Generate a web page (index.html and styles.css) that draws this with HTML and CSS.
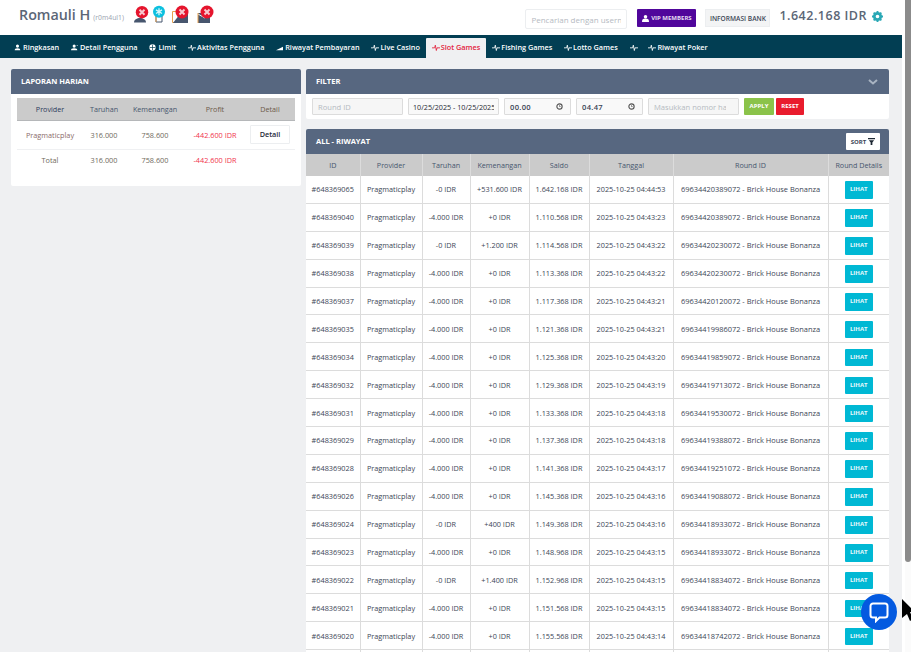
FILE: index.html
```html
<!DOCTYPE html>
<html lang="id">
<head>
    <meta charset="UTF-8">
    <meta name="viewport" content="width=device-width, initial-scale=1.0">
    <title>Romauli H - Slot Games</title>
    <link rel="stylesheet" href="styles.css">
</head>
<body>
    <div class="page">
        <header class="topbar">
            <div class="user">
                <span class="user-name">Romauli H</span>
                <span class="user-code">(r0m4ul1)</span>
                <div class="status-icons">
                    <svg class="status" width="15" height="18" viewBox="0 0 15 18"><path d="M0 17.500c0-3 3-4.500 6-4.500s6 1.500 6 4.500z" fill="#47566e"/><circle cx="8" cy="7.200" r="6.200" fill="#e5152d"/><path d="M5.500 4.700l5 5M10.500 4.700l-5 5" stroke="#f7c9cf" stroke-width="2"/></svg>
                    <svg class="status" width="14" height="18" viewBox="0 0 14 18"><path d="M4 11h6v6H4z" fill="#fff" stroke="#47566e"/><path d="M4 11v6" stroke="#e8a14f"/><circle cx="7" cy="6.700" r="6" fill="#0cc0df"/><path d="M7 3.200v7M4 4.900l6 3.600M10 4.900l-6 3.600" stroke="#d8f6fb" stroke-width="1.300"/></svg>
                    <svg class="status wide" width="20" height="18" viewBox="0 0 20 18"><path d="M2.500 6.500h6v11h-6z" fill="#fff" stroke="#e8a14f"/><path d="M3 18l7-9h8v9z" fill="#47566e"/><circle cx="12" cy="7" r="6.500" fill="#e5152d"/><path d="M9.500 4.500l5 5M14.500 4.500l-5 5" stroke="#f7c9cf" stroke-width="2"/></svg>
                    <svg class="status wide" width="20" height="18" viewBox="0 0 20 18"><path d="M3 8h12v10H3z" fill="#47566e"/><path d="M3 9l7 4" stroke="#fff"/><path d="M3 8v10" stroke="#e8a14f"/><circle cx="12" cy="7" r="6.500" fill="#e5152d"/><path d="M9.500 4.500l5 5M14.500 4.500l-5 5" stroke="#f7c9cf" stroke-width="2"/></svg>
                </div>
            </div>
            <div class="top-actions">
                <input class="search" type="text" placeholder="Pencarian dengan username">
                <a class="btn-vip" href="#">
                    <svg width="7" height="7" viewBox="0 0 8 8"><circle cx="4" cy="2" r="2" fill="#fff"/><path d="M0 8c0-3 1-4 4-4s4 1 4 4z" fill="#fff"/></svg>
                    VIP MEMBERS
                </a>
                <a class="btn-bank" href="#">INFORMASI BANK</a>
                <span class="balance">1.642.168 IDR</span>
                <svg class="gear" width="11" height="11" viewBox="0 0 12 12"><circle cx="6" cy="6" r="3.500" fill="none" stroke="#2aa8b5" stroke-width="3"/><path d="M6 0v2M6 10v2M0 6h2M10 6h2M1.800 1.800l1.400 1.400M8.800 8.800l1.400 1.400M1.800 10.200l1.400-1.400M8.800 3.200l1.400-1.400" stroke="#2aa8b5" stroke-width="2"/></svg>
            </div>
        </header>

        <nav class="tabs">
            <a class="tab" href="#"><svg class="ico" viewBox="0 0 10 10"><circle cx="5" cy="3" r="2.200"/><path d="M1 9c0-2 1-3 4-3s4 1 4 3z"/></svg>Ringkasan</a>
            <a class="tab" href="#"><svg class="ico" viewBox="0 0 10 10"><circle cx="4.500" cy="3" r="2.200"/><path d="M0 9c0-2 1-3 4.500-3S9 7 9 9z"/><path d="M8 2h2v1H8z"/></svg>Detail Pengguna</a>
            <a class="tab" href="#"><svg class="ico" viewBox="0 0 10 10"><circle cx="5" cy="5" r="4.500"/><path d="M1 5h8M5 1v8" stroke="#023e53" stroke-width="1"/></svg>Limit</a>
            <a class="tab" href="#"><svg class="ico pulse" viewBox="0 0 12 10"><path d="M0 5.500h4L5 1.500l1.500 8 1-4h4.500"/></svg>Aktivitas Pengguna</a>
            <a class="tab" href="#"><svg class="ico" viewBox="0 0 10 10"><path d="M0 9l10-5v5z"/></svg>Riwayat Pembayaran</a>
            <a class="tab" href="#"><svg class="ico pulse" viewBox="0 0 12 10"><path d="M0 5.500h4L5 1.500l1.500 8 1-4h4.500"/></svg>Live Casino</a>
            <a class="tab active" href="#"><svg class="ico pulse" viewBox="0 0 12 10"><path d="M0 5.500h4L5 1.500l1.500 8 1-4h4.500"/></svg>Slot Games</a>
            <a class="tab" href="#"><svg class="ico pulse" viewBox="0 0 12 10"><path d="M0 5.500h4L5 1.500l1.500 8 1-4h4.500"/></svg>Fishing Games</a>
            <a class="tab" href="#"><svg class="ico pulse" viewBox="0 0 12 10"><path d="M0 5.500h4L5 1.500l1.500 8 1-4h4.500"/></svg>Lotto Games</a>
            <a class="tab tab-blank" href="#"><svg class="ico pulse" viewBox="0 0 12 10"><path d="M0 5.500h4L5 1.500l1.500 8 1-4h4.500"/></svg></a>
            <a class="tab" href="#"><svg class="ico pulse" viewBox="0 0 12 10"><path d="M0 5.500h4L5 1.500l1.500 8 1-4h4.500"/></svg>Riwayat Poker</a>
        </nav>

        <main class="content">
            <section class="side">
                <div class="card">
                    <div class="card-head">LAPORAN HARIAN</div>
                    <div class="report-body">
                        <table class="report">
                            <thead>
                                <tr><th class="c-navy">Provider</th><th>Taruhan</th><th>Kemenangan</th><th class="c-brown">Profit</th><th class="c-brown">Detail</th></tr>
                            </thead>
                            <tbody>
                                <tr>
                                    <td class="c-prov">Pragmaticplay</td><td>316.000</td><td>758.600</td><td class="c-red">-442.600 IDR</td>
                                    <td><a class="btn-detail" href="#">Detail</a></td>
                                </tr>
                                <tr class="row-total">
                                    <td>Total</td><td>316.000</td><td>758.600</td><td class="c-red">-442.600 IDR</td><td></td>
                                </tr>
                            </tbody>
                        </table>
                    </div>
                </div>
            </section>

            <section class="main">
                <div class="card filter">
                    <div class="card-head">FILTER
                        <svg class="chev" width="10" height="6" viewBox="0 0 10 6"><path d="M1 1l4 3.500L9 1" fill="none" stroke="#a9b4c2" stroke-width="2"/></svg>
                    </div>
                    <div class="filter-body">
                        <input class="field f-round" type="text" placeholder="Round ID">
                        <input class="field f-date" type="text" value="10/25/2025 - 10/25/2025">
                        <div class="field f-time"><span>00.00</span><svg width="7" height="7" viewBox="0 0 8 8"><circle cx="4" cy="4" r="3" fill="none" stroke="#555" stroke-width="1.300"/><path d="M4 2.500V4h1.300" fill="none" stroke="#555" stroke-width=".8"/></svg></div>
                        <div class="field f-time"><span>04.47</span><svg width="7" height="7" viewBox="0 0 8 8"><circle cx="4" cy="4" r="3" fill="none" stroke="#555" stroke-width="1.300"/><path d="M4 2.500V4h1.300" fill="none" stroke="#555" stroke-width=".8"/></svg></div>
                        <input class="field f-phone" type="text" placeholder="Masukkan nomor handphone">
                        <a class="btn-apply" href="#">APPLY</a>
                        <a class="btn-reset" href="#">RESET</a>
                    </div>
                </div>

                <div class="history">
                    <div class="card-head history-head">ALL - RIWAYAT
                        <a class="btn-sort" href="#">SORT
                            <svg width="7" height="7" viewBox="0 0 8 8"><path d="M0 0h8v1.500H0zM1 2.500h6L5 5v3H3V5z" fill="#1c2733"/></svg>
                        </a>
                    </div>
                    <table class="rounds">
                        <colgroup>
                            <col class="w-id"><col class="w-prov"><col class="w-bet"><col class="w-win"><col class="w-bal"><col class="w-date"><col class="w-round"><col class="w-det">
                        </colgroup>
                        <thead>
                            <tr><th>ID</th><th>Provider</th><th>Taruhan</th><th>Kemenangan</th><th>Saldo</th><th>Tanggal</th><th>Round ID</th><th>Round Details</th></tr>
                        </thead>
                        <tbody id="rows"></tbody>
                    </table>
                </div>
            </section>
        </main>
    </div>

    <div class="scrollbar"><div class="thumb"></div></div>

    <a class="chat" href="#">
        <svg width="22" height="22" viewBox="0 0 22 22"><path d="M5 2.500h12a2.500 2.500 0 0 1 2.500 2.500v9a2.500 2.500 0 0 1-2.500 2.500h-5.500L8 20v-3.500H5A2.500 2.500 0 0 1 2.500 14V5A2.500 2.500 0 0 1 5 2.500z" fill="none" stroke="#fff" stroke-width="2"/></svg>
    </a>
    <svg class="cursor" width="12" height="24" viewBox="0 0 12 24"><path d="M1 1l13 13H9l3 7-3 2-3-7-5 4z" fill="#000"/></svg>

    <script src="app.js"></script>
</body>
</html>
```
FILE: styles.css
```css
* {
    box-sizing: border-box;
}

html, body {
    height: 100%;
}

body {
    margin: 0;
    height: 652px;
    overflow: hidden;
    display: flex;
    background-color: #fff;
    font-family: 'Open Sans', sans-serif;
    font-size: 7.3px;
    color: #47566e;
}

a {
    text-decoration: none;
}

.page {
    width: 902px;
    flex: none;
    height: 652px;
    overflow: hidden;
    background-color: #eff0f2;
}

/* Header */
.topbar {
    height: 35px;
    background-color: #fff;
    display: flex;
    justify-content: space-between;
    padding: 0 19px;
}

.user {
    display: flex;
    align-items: flex-start;
}

.user-name {
    font-size: 14.3px;
    font-weight: 600;
    color: #5b6676;
    line-height: 30px;
}

.user-code {
    font-size: 6.8px;
    color: #9aa3af;
    margin-left: 3px;
    line-height: 36px;
}

.status-icons {
    display: flex;
    gap: 3px;
    margin: 5px 0 0 10px;
}

.status.wide {
    margin-left: 1.5px;
}

.top-actions {
    display: flex;
    align-items: flex-start;
    padding-top: 9px;
}

.search {
    width: 102px;
    height: 20px;
    border: 1px solid #eceef0;
    border-radius: 2px;
    padding: 0 5px;
    font-family: inherit;
    font-size: 8px;
    margin-right: 10px;
}

.search::placeholder,
.field::placeholder {
    color: #b5bac1;
}

.btn-vip {
    background-color: #50069b;
    color: #e4dcf2;
    width: 59px;
    height: 18px;
    font-size: 6px;
    font-weight: 700;
    display: flex;
    align-items: center;
    justify-content: center;
    gap: 2px;
    border-radius: 1px;
    margin-right: 9px;
}

.btn-bank {
    background-color: #f3f4f5;
    color: #3c4656;
    width: 65px;
    height: 18px;
    font-size: 6.6px;
    font-weight: 600;
    display: flex;
    align-items: center;
    justify-content: center;
    border: 1px solid #eceef0;
    margin-right: 9px;
}

.balance {
    font-size: 12.5px;
    line-height: 14px;
    font-weight: 600;
    letter-spacing: .5px;
    color: #5b6676;
    margin-right: 5px;
}

.gear {
    margin-top: 1.5px;
}

/* Tabs */
.tabs {
    height: 23px;
    background-color: #023e53;
    display: flex;
    align-items: flex-end;
    padding-left: 14px;
}

.tab {
    height: 20px;
    display: flex;
    align-items: center;
    padding: 0 0 2px;
    margin-right: 11.8px;
    font-size: 7.3px;
    font-weight: 600;
    color: #fff;
    white-space: nowrap;
}

.tab.active {
    background-color: #eff0f2;
    color: #e3223c;
    padding: 0 6px 2px;
    margin: 0 6px 0 -6px;
    border-radius: 1px 1px 0 0;
}

.tab.tab-blank {
    margin-right: 9.8px;
}

.ico {
    width: 7px;
    height: 7px;
    fill: #fff;
    margin-right: 2px;
    flex: none;
}

.ico.pulse {
    width: 8px;
    margin-right: 1px;
    fill: none;
    stroke: #fff;
    stroke-width: 1.3;
}

.tab.active .ico.pulse {
    stroke: #e3223c;
}

/* Content */
.content {
    display: flex;
    gap: 5px;
    padding: 11px 13px 0 11px;
    align-items: flex-start;
}

.side {
    width: 290px;
    flex: none;
}

.main {
    flex: 1;
    min-width: 0;
}

.card {
    background-color: #fff;
    border-radius: 2px;
}

.card-head {
    height: 25px;
    background-color: #576780;
    color: #fff;
    font-size: 7.5px;
    font-weight: 700;
    padding: 0 0 2px 10px;
    display: flex;
    justify-content: space-between;
    align-items: center;
    border-radius: 2px 2px 0 0;
}

/* Daily report */
.report-body {
    padding: 4px 6px 0;
    height: 92px;
}

.report {
    width: 100%;
    border-collapse: collapse;
    table-layout: fixed;
    text-align: center;
}

.report th {
    height: 22px;
    background-color: #cbcbcb;
    border-bottom: 1px solid #b5b7b9;
    font-weight: 400;
    font-size: 7.2px;
    color: #47566e;
}

.report th:nth-child(1) { width: 66px; }
.report th:nth-child(2) { width: 42px; }
.report th:nth-child(3) { width: 60px; }
.report th:nth-child(4) { width: 60px; }

.report .c-navy {
    color: #2b3a5c;
}

.report .c-brown {
    color: #6d5a4a;
}

.report td {
    height: 29px;
    border-bottom: 1px solid #eff0f2;
    font-size: 7.3px;
    color: #6f6a5c;
}

.report .row-total td {
    height: 22px;
    border-bottom: 0;
}

.report .c-prov {
    color: #8a6a6a;
}

.report .c-red {
    color: #f0324c;
}

.btn-detail {
    display: block;
    width: 40px;
    height: 19px;
    margin: 0 auto;
    line-height: 17px;
    background-color: #fff;
    border: 1px solid #eceef0;
    border-radius: 1px;
    color: #1f2a3a;
    font-weight: 600;
    font-size: 7.3px;
}

/* Filter */
.filter {
    margin-bottom: 10px;
}

.card-head .chev {
    margin: 2px 11px 0 0;
}

.filter-body {
    height: 25px;
    display: flex;
    align-items: flex-start;
    padding: 4px 0 0 6px;
}

.field {
    height: 17px;
    border: 1px solid #dcdcdc;
    border-radius: 1px;
    background-color: #f6f6f6;
    font-family: inherit;
    font-size: 7.6px;
    padding: 0 5px;
    color: #3c4656;
    margin-right: 5px;
    flex: none;
}

.f-round {
    width: 91px;
}

.f-date {
    width: 91px;
    padding: 0 4px;
    font-size: 7.2px;
    color: #1f2935;
    background-color: #f9f9f9;
}

.f-time {
    width: 67px;
    display: flex;
    align-items: center;
    justify-content: space-between;
    padding: 0 7px 0 5px;
    font-size: 7.6px;
    letter-spacing: .3px;
    font-weight: 600;
    background-color: #f9f9f9;
}

.f-phone {
    width: 91px;
    padding-right: 12px;
}

.btn-apply, .btn-reset {
    height: 17px;
    line-height: 17px;
    text-align: center;
    color: #fff;
    font-size: 6px;
    font-weight: 700;
    border-radius: 1px;
    flex: none;
}

.btn-apply {
    width: 30px;
    background-color: #8bc34a;
    margin-right: 2px;
}

.btn-reset {
    width: 28px;
    background-color: #e91c2d;
}

/* History table */
.history-head {
    padding-right: 9px;
}

.btn-sort {
    background-color: #fff;
    width: 34px;
    height: 17px;
    margin-top: 2px;
    border-radius: 1px;
    color: #3c4656;
    font-size: 6px;
    font-weight: 700;
    display: flex;
    align-items: center;
    justify-content: center;
    gap: 2px;
}

.rounds {
    width: 583px;
    border-collapse: collapse;
    table-layout: fixed;
    background-color: #fff;
    text-align: center;
}

.w-id { width: 54px; }
.w-prov { width: 62px; }
.w-bet { width: 48px; }
.w-win { width: 59px; }
.w-bal { width: 60px; }
.w-date { width: 84px; }
.w-round { width: 155px; }
.w-det { width: 61px; }

.rounds th {
    height: 21.5px;
    background-color: #cbcbcb;
    border-right: 1px solid #dcdcdc;
    font-weight: 400;
    font-size: 7.2px;
    color: #47566e;
}

.rounds td {
    height: 27.9px;
    border: 1px solid #dcdcdc;
    border-width: 0 1px 1px 1px;
    font-size: 7.3px;
    color: #3c4656;
    padding: 0;
}

.rounds th:last-child, .rounds td:last-child {
    border-right: 0;
}

.rounds td:first-child {
    border-left: 0;
}

.rounds td.c-round {
    font-size: 7.45px;
}

.btn-lihat {
    display: block;
    width: 28px;
    height: 17.5px;
    margin: 1.5px auto 0;
    line-height: 17.5px;
    background-color: #00b8d4;
    border-radius: 1px;
    color: #eaf9fc;
    font-size: 6px;
    font-weight: 700;
}

/* Overlays */
.scrollbar {
    width: 6px;
    height: 652px;
    margin-left: 3px;
    background-color: #fbfbfb;
}

.thumb {
    height: 562px;
    background-color: #8b8b8b;
    border-radius: 0 0 3px 3px;
}

.chat {
    position: fixed;
    left: 861px;
    top: 594px;
    width: 36px;
    height: 36px;
    border-radius: 50%;
    background-color: #045ae0;
    display: flex;
    align-items: center;
    justify-content: center;
}

.cursor {
    position: fixed;
    left: 901px;
    top: 598px;
}
```
FILE: app.js
```js
const games = [
    ['648369065', '-0', '+531.600', '1.642.168', '04:44:53', '69634420389072'],
    ['648369040', '-4.000', '+0', '1.110.568', '04:43:23', '69634420389072'],
    ['648369039', '-0', '+1.200', '1.114.568', '04:43:22', '69634420230072'],
    ['648369038', '-4.000', '+0', '1.113.368', '04:43:22', '69634420230072'],
    ['648369037', '-4.000', '+0', '1.117.368', '04:43:21', '69634420120072'],
    ['648369035', '-4.000', '+0', '1.121.368', '04:43:21', '69634419986072'],
    ['648369034', '-4.000', '+0', '1.125.368', '04:43:20', '69634419859072'],
    ['648369032', '-4.000', '+0', '1.129.368', '04:43:19', '69634419713072'],
    ['648369031', '-4.000', '+0', '1.133.368', '04:43:18', '69634419530072'],
    ['648369029', '-4.000', '+0', '1.137.368', '04:43:18', '69634419388072'],
    ['648369028', '-4.000', '+0', '1.141.368', '04:43:17', '69634419251072'],
    ['648369026', '-4.000', '+0', '1.145.368', '04:43:16', '69634419088072'],
    ['648369024', '-0', '+400', '1.149.368', '04:43:16', '69634418933072'],
    ['648369023', '-4.000', '+0', '1.148.968', '04:43:15', '69634418933072'],
    ['648369022', '-0', '+1.400', '1.152.968', '04:43:15', '69634418834072'],
    ['648369021', '-4.000', '+0', '1.151.568', '04:43:15', '69634418834072'],
    ['648369020', '-4.000', '+0', '1.155.568', '04:43:14', '69634418742072']
];

// the next row only shows its top edge at the bottom of the window
document.getElementById('rows').innerHTML = games.map(function (g) {
    return '<tr>' +
        '<td>#' + g[0] + '</td>' +
        '<td>Pragmaticplay</td>' +
        '<td>' + g[1] + ' IDR</td>' +
        '<td>' + g[2] + ' IDR</td>' +
        '<td>' + g[3] + ' IDR</td>' +
        '<td>2025-10-25 ' + g[4] + '</td>' +
        '<td class="c-round">' + g[5] + ' - Brick House Bonanza</td>' +
        '<td><a class="btn-lihat" href="#">LIHAT</a></td>' +
        '</tr>';
}).join('') + '<tr><td></td><td></td><td></td><td></td><td></td><td></td><td></td><td></td></tr>';
```
